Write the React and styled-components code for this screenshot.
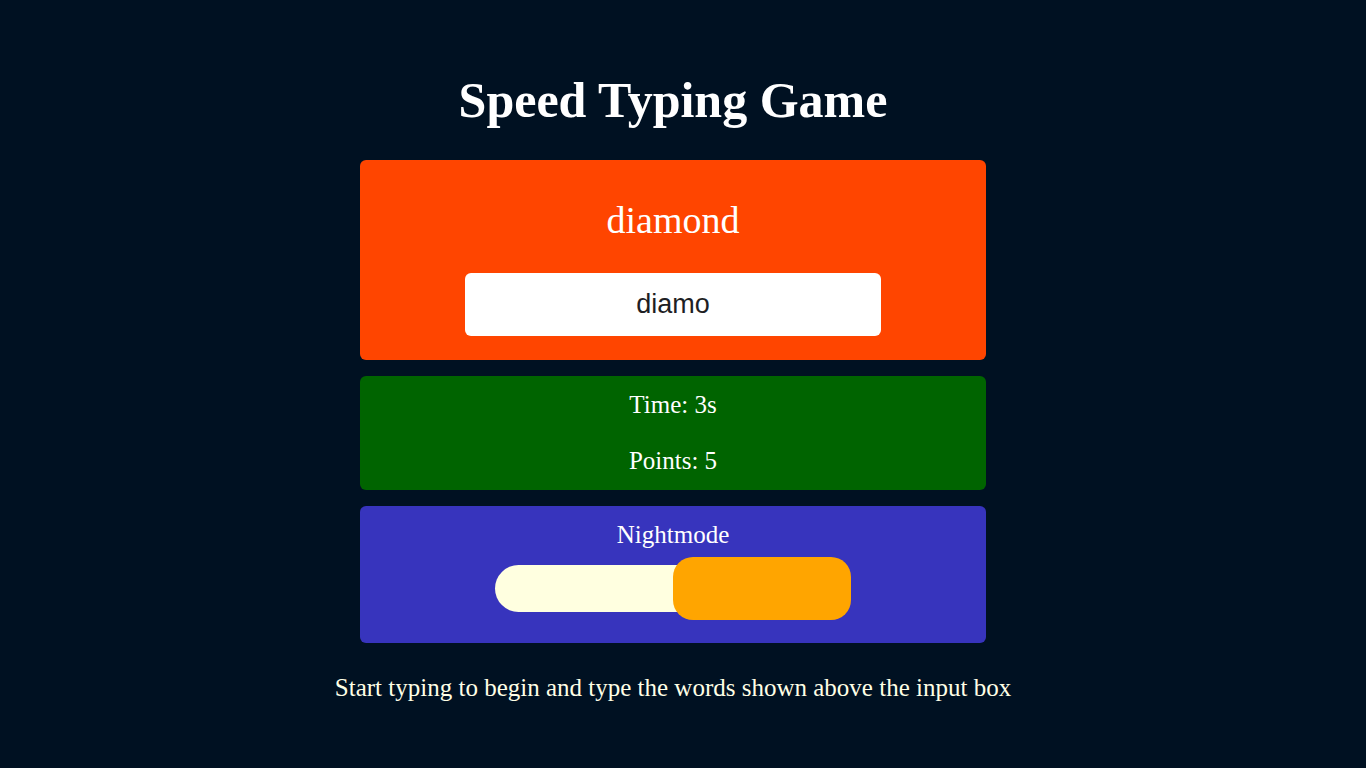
import React from "react";
import styled, { createGlobalStyle } from "styled-components";

const GlobalStyle = createGlobalStyle`
  html, body {
    margin: 0;
    padding: 0;
    background-color: #001122;
  }
  body {
    font-family: "Liberation Serif", "Times New Roman", serif;
    color: white;
  }
`;

const Page = styled.main`
  display: flex;
  flex-direction: column;
  align-items: center;
  text-align: center;
  padding: 71px 20px 90px 0;
`;

const Title = styled.h1`
  margin: 0 0 31px;
  font-size: 50px;
  line-height: 58px;
  font-weight: bold;
  color: white;
`;

const Card = styled.section`
  width: 626px;
  box-sizing: border-box;
  border-radius: 6px;
  background-color: ${(props) => props.bg};
  padding: ${(props) => props.pad};
  margin-bottom: ${(props) => props.gap || "16px"};
  display: flex;
  flex-direction: column;
  align-items: center;
`;

const Word = styled.div`
  font-size: 38px;
  line-height: 44px;
  margin-bottom: 31px;
`;

const WordInput = styled.input`
  width: 416px;
  height: 63px;
  box-sizing: border-box;
  border: none;
  outline: none;
  border-radius: 6px;
  background: white;
  color: #1e1e24;
  font-family: "Liberation Sans", Arial, sans-serif;
  font-size: 27px;
  text-align: center;
`;

const Stat = styled.p`
  margin: 0;
  font-size: 25px;
  line-height: 28px;
  & + & {
    margin-top: 28px;
  }
`;

const Label = styled.div`
  font-size: 25px;
  line-height: 28px;
  margin-bottom: 8px;
`;

const Toggle = styled.div`
  position: relative;
  width: 356px;
  height: 63px;
  display: flex;
  align-items: center;
  cursor: pointer;
`;

const Track = styled.div`
  width: 100%;
  height: 47px;
  border-radius: 23.5px;
  background-color: #ffffe0;
`;

const Knob = styled.div`
  position: absolute;
  top: 0;
  right: 0;
  width: 178px;
  height: 63px;
  border-radius: 20px;
  background-color: #ffa500;
`;

const Hint = styled.p`
  margin: 15px 0 0;
  font-size: 25px;
  line-height: 28px;
  color: #ffffe6;
`;

const App = () => {
  return (
    <>
      <GlobalStyle />
      <Page>
        <Title>Speed Typing Game</Title>
        <Card bg="#ff4500" pad="38px 0 24px">
          <Word>diamond</Word>
          <WordInput defaultValue="diamo" />
        </Card>
        <Card bg="#006400" pad="15px 0">
          <Stat>Time: 3s</Stat>
          <Stat>Points: 5</Stat>
        </Card>
        <Card bg="#3734bd" pad="15px 0 23px">
          <Label>Nightmode</Label>
          <Toggle>
            <Track />
            <Knob />
          </Toggle>
        </Card>
        <Hint>Start typing to begin and type the words shown above the input box</Hint>
      </Page>
    </>
  );
};

export default App;
